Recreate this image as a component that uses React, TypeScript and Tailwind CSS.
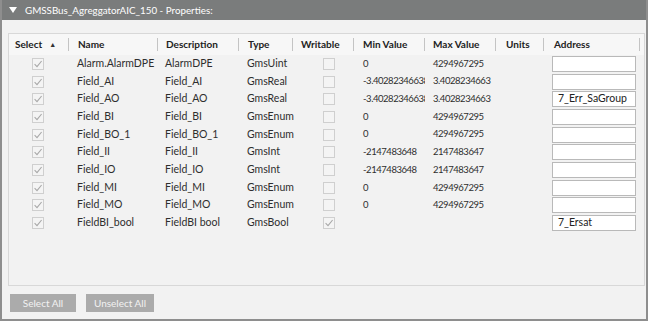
import React from 'react';

const font = { fontFamily: 'Lato, "Noto Sans", sans-serif' };

const rows = [
  { name: 'Alarm.AlarmDPE', desc: 'AlarmDPE', type: 'GmsUint', writable: false, min: '0', max: '4294967295', address: '' },
  { name: 'Field_AI', desc: 'Field_AI', type: 'GmsReal', writable: false, min: '-3.4028234663852886E+38', max: '3.4028234663', address: '' },
  { name: 'Field_AO', desc: 'Field_AO', type: 'GmsReal', writable: false, min: '-3.4028234663852886E+38', max: '3.4028234663', address: '7_Err_SaGroup' },
  { name: 'Field_BI', desc: 'Field_BI', type: 'GmsEnum', writable: false, min: '0', max: '4294967295', address: '' },
  { name: 'Field_BO_1', desc: 'Field_BO_1', type: 'GmsEnum', writable: false, min: '0', max: '4294967295', address: '' },
  { name: 'Field_II', desc: 'Field_II', type: 'GmsInt', writable: false, min: '-2147483648', max: '2147483647', address: '' },
  { name: 'Field_IO', desc: 'Field_IO', type: 'GmsInt', writable: false, min: '-2147483648', max: '2147483647', address: '' },
  { name: 'Field_MI', desc: 'Field_MI', type: 'GmsEnum', writable: false, min: '0', max: '4294967295', address: '' },
  { name: 'Field_MO', desc: 'Field_MO', type: 'GmsEnum', writable: false, min: '0', max: '4294967295', address: '' },
  { name: 'FieldBI_bool', desc: 'FieldBI bool', type: 'GmsBool', writable: true, min: '', max: '', address: '7_Ersat' },
];

const cols = 'grid grid-cols-[60px_89px_81px_54px_61px_71px_71px_48px_96px]';

function Box({ checked }: { checked: boolean }) {
  return (
    <svg width="12" height="12" viewBox="0 0 12 12">
      <rect x="0.5" y="0.5" width="11" height="11" fill="#f4f4f4" stroke="#cfcfcf" />
      {checked && <path d="M2.6 6.2 L5 8.6 L9.6 3" fill="none" stroke="#a8a8a8" strokeWidth="1.1" />}
    </svg>
  );
}

function Head({ label, pl, sort }: { label: string; pl: string; sort?: boolean }) {
  return (
    <div className={`flex items-center justify-between ${pl}`}>
      <span className="font-bold text-[10px] text-[#222] flex items-center gap-[7px]">
        {label}
        {sort && <span className="text-[7px] text-[#333]">▲</span>}
      </span>
      <span className="w-px h-[13px] bg-[#c4c4c4]" />
    </div>
  );
}

export default function App() {
  return (
    <div style={font} className="w-[648px] h-[321px] bg-[#f2f2f2] border-2 border-t-0 border-[#8e8e8e] flex flex-col text-[10.5px] text-[#2e2e2e] overflow-hidden">
      <div className="h-[20px] shrink-0 bg-[#7a7c7c] flex items-center pl-[8px] text-white text-[9.8px] -mx-[2px]">
        <svg width="8" height="6" viewBox="0 0 8 6" className="ml-[1px] mr-[8px]">
          <path d="M0 0 H8 L4 6 Z" fill="#fff" />
        </svg>
        <span>GMSSBus_AgreggatorAIC_150 - Properties:</span>
      </div>

      <div className="mt-[13px] ml-[6px] mr-[1px] h-[253px] border border-[#d8d8d8] bg-[#f2f2f2] flex flex-col">
        <div className={`${cols} h-[21px] items-center bg-[#f7f7f7]`}>
          <Head label="Select" pl="pl-[6px]" sort />
          <Head label="Name" pl="pl-[9px]" />
          <Head label="Description" pl="pl-[8px]" />
          <Head label="Type" pl="pl-[9px]" />
          <Head label="Writable" pl="pl-[8px]" />
          <Head label="Min Value" pl="pl-[9px]" />
          <Head label="Max Value" pl="pl-[8px]" />
          <Head label="Units" pl="pl-[10px]" />
          <Head label="Address" pl="pl-[10px]" />
        </div>
        {rows.map((r) => (
          <div key={r.name} className={`${cols} h-[17.7px] items-center`}>
            <div className="pl-[23px] flex"><Box checked /></div>
            <div className="pl-[8px] whitespace-nowrap">{r.name}</div>
            <div className="pl-[7px] whitespace-nowrap">{r.desc}</div>
            <div className="pl-[8px] whitespace-nowrap">{r.type}</div>
            <div className="pl-[30px] flex"><Box checked={r.writable} /></div>
            <div className="pl-[9px] pr-[2px] whitespace-nowrap overflow-hidden text-[9.5px] tracking-[-0.45px]">{r.min}</div>
            <div className="pl-[8px] whitespace-nowrap overflow-hidden text-[9.5px] tracking-[-0.45px]">{r.max}</div>
            <div />
            <div className="pl-[8px]">
              <div className="w-[84px] h-[16px] bg-white border border-[#b9b9b9] flex items-center pl-[5px] text-[#222]">
                {r.address}
              </div>
            </div>
          </div>
        ))}
      </div>

      <div className="flex gap-[10px] mt-[8px] ml-[8px]">
        <button className="w-[66px] h-[18px] bg-[#ababab] text-[#f2f2f2] text-[10px] flex items-center justify-center">Select All</button>
        <button className="w-[68px] h-[18px] bg-[#ababab] text-[#f2f2f2] text-[10px] flex items-center justify-center">Unselect All</button>
      </div>
    </div>
  );
}
